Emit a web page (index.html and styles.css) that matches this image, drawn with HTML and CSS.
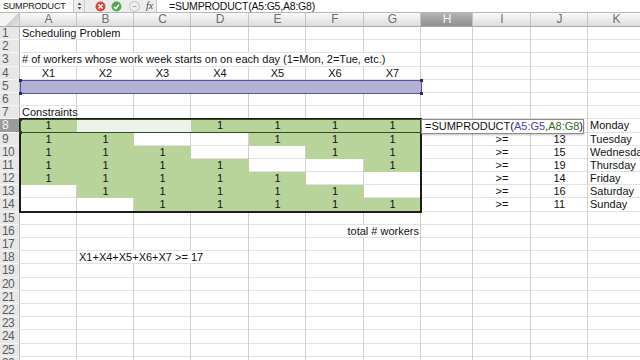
FILE: index.html
```html
<!DOCTYPE html>
<html lang="en">
<head>
<meta charset="utf-8">
<title>Scheduling Problem</title>
<link rel="stylesheet" href="styles.css">
</head>
<body>
<div class="fbar">
  <div class="namebox">SUMPRODUCT</div>
  <div class="stepper">
    <svg width="5" height="8" viewBox="0 0 5 8"><path d="M2.5 0.5 L4.5 3 H0.5 Z M2.5 7.5 L4.5 5 H0.5 Z" fill="#555"/></svg>
  </div>
  <div class="tools">
    <svg class="btn" width="11" height="11" viewBox="0 0 11 11"><circle cx="5.5" cy="5.5" r="5" fill="#d9483f"/><path d="M3.5 3.5 L7.5 7.5 M7.5 3.5 L3.5 7.5" stroke="#fff" stroke-width="1.6"/></svg>
    <svg class="btn" width="11" height="11" viewBox="0 0 11 11"><circle cx="5.5" cy="5.5" r="5" fill="#4cab4a"/><path d="M3 5.8 L4.8 7.5 L8 3.8" stroke="#fff" stroke-width="1.6" fill="none"/></svg>
    <svg class="btn faded" width="11" height="11" viewBox="0 0 11 11"><circle cx="5.5" cy="5.5" r="4.8" fill="#f2f2f2" stroke="#bbb"/><path d="M3.5 5.5 H7.5" stroke="#aaa" stroke-width="1.2"/></svg>
    <span class="fx">fx</span>
  </div>
  <div class="formula">=SUMPRODUCT(A5:G5,A8:G8)</div>
</div>

<div class="sheet">
  <div class="corner"></div>
  <div class="ch">A</div><div class="ch">B</div><div class="ch">C</div><div class="ch">D</div><div class="ch">E</div><div class="ch">F</div><div class="ch">G</div><div class="ch sel">H</div><div class="ch">I</div><div class="ch">J</div><div class="ch">K</div>

  <div class="rh">1</div><div class="c span2">Scheduling Problem</div><div class="c"></div><div class="c"></div><div class="c"></div><div class="c"></div><div class="c"></div><div class="c"></div><div class="c"></div><div class="c"></div><div class="c"></div>
  <div class="rh">2</div><div class="c"></div><div class="c"></div><div class="c"></div><div class="c"></div><div class="c"></div><div class="c"></div><div class="c"></div><div class="c"></div><div class="c"></div><div class="c"></div><div class="c"></div>
  <div class="rh">3</div><div class="c span7"># of workers whose work week starts on on each day (1=Mon, 2=Tue, etc.)</div><div class="c"></div><div class="c"></div><div class="c"></div><div class="c"></div>
  <div class="rh">4</div><div class="c mid">X1</div><div class="c mid">X2</div><div class="c mid">X3</div><div class="c mid">X4</div><div class="c mid">X5</div><div class="c mid">X6</div><div class="c mid">X7</div><div class="c"></div><div class="c"></div><div class="c"></div><div class="c"></div>
  <div class="rh">5</div><div class="c var"></div><div class="c var"></div><div class="c var"></div><div class="c var"></div><div class="c var"></div><div class="c var"></div><div class="c var"></div><div class="c"></div><div class="c"></div><div class="c"></div><div class="c"></div>
  <div class="rh">6</div><div class="c"></div><div class="c"></div><div class="c"></div><div class="c"></div><div class="c"></div><div class="c"></div><div class="c"></div><div class="c"></div><div class="c"></div><div class="c"></div><div class="c"></div>
  <div class="rh">7</div><div class="c">Constraints</div><div class="c"></div><div class="c"></div><div class="c"></div><div class="c"></div><div class="c"></div><div class="c"></div><div class="c"></div><div class="c"></div><div class="c"></div><div class="c"></div>
  <div class="rh sel">8</div><div class="c on">1</div><div class="c pale"></div><div class="c pale"></div><div class="c on">1</div><div class="c on">1</div><div class="c on">1</div><div class="c on">1</div>
  <div class="c edit-cell"><div class="edit">=SUMPRODUCT(<span class="ref5">A5:G5</span>,<span class="ref8">A8:G8</span>)</div></div><div class="c"></div><div class="c"></div><div class="c">Monday</div>
  <div class="rh">9</div><div class="c on">1</div><div class="c on">1</div><div class="c"></div><div class="c"></div><div class="c on">1</div><div class="c on">1</div><div class="c on">1</div><div class="c"></div><div class="c mid">&gt;=</div><div class="c mid">13</div><div class="c">Tuesday</div>
  <div class="rh">10</div><div class="c on">1</div><div class="c on">1</div><div class="c on">1</div><div class="c"></div><div class="c"></div><div class="c on">1</div><div class="c on">1</div><div class="c"></div><div class="c mid">&gt;=</div><div class="c mid">15</div><div class="c">Wednesday</div>
  <div class="rh">11</div><div class="c on">1</div><div class="c on">1</div><div class="c on">1</div><div class="c on">1</div><div class="c"></div><div class="c"></div><div class="c on">1</div><div class="c"></div><div class="c mid">&gt;=</div><div class="c mid">19</div><div class="c">Thursday</div>
  <div class="rh">12</div><div class="c on">1</div><div class="c on">1</div><div class="c on">1</div><div class="c on">1</div><div class="c on">1</div><div class="c"></div><div class="c"></div><div class="c"></div><div class="c mid">&gt;=</div><div class="c mid">14</div><div class="c">Friday</div>
  <div class="rh">13</div><div class="c"></div><div class="c on">1</div><div class="c on">1</div><div class="c on">1</div><div class="c on">1</div><div class="c on">1</div><div class="c"></div><div class="c"></div><div class="c mid">&gt;=</div><div class="c mid">16</div><div class="c">Saturday</div>
  <div class="rh">14</div><div class="c"></div><div class="c"></div><div class="c on">1</div><div class="c on">1</div><div class="c on">1</div><div class="c on">1</div><div class="c on">1</div><div class="c"></div><div class="c mid">&gt;=</div><div class="c mid">11</div><div class="c">Sunday</div>
  <div class="rh">15</div><div class="c"></div><div class="c"></div><div class="c"></div><div class="c"></div><div class="c"></div><div class="c"></div><div class="c"></div><div class="c"></div><div class="c"></div><div class="c"></div><div class="c"></div>
  <div class="rh">16</div><div class="c"></div><div class="c"></div><div class="c"></div><div class="c"></div><div class="c"></div><div class="c span2 right">total # workers</div><div class="c"></div><div class="c"></div><div class="c"></div><div class="c"></div>
  <div class="rh">17</div><div class="c"></div><div class="c"></div><div class="c"></div><div class="c"></div><div class="c"></div><div class="c"></div><div class="c"></div><div class="c"></div><div class="c"></div><div class="c"></div><div class="c"></div>
  <div class="rh">18</div><div class="c"></div><div class="c span3">X1+X4+X5+X6+X7 &gt;= 17</div><div class="c"></div><div class="c"></div><div class="c"></div><div class="c"></div><div class="c"></div><div class="c"></div><div class="c"></div>
  <div class="rh">19</div><div class="c"></div><div class="c"></div><div class="c"></div><div class="c"></div><div class="c"></div><div class="c"></div><div class="c"></div><div class="c"></div><div class="c"></div><div class="c"></div><div class="c"></div>
  <div class="rh">20</div><div class="c"></div><div class="c"></div><div class="c"></div><div class="c"></div><div class="c"></div><div class="c"></div><div class="c"></div><div class="c"></div><div class="c"></div><div class="c"></div><div class="c"></div>
  <div class="rh">21</div><div class="c"></div><div class="c"></div><div class="c"></div><div class="c"></div><div class="c"></div><div class="c"></div><div class="c"></div><div class="c"></div><div class="c"></div><div class="c"></div><div class="c"></div>
  <div class="rh">22</div><div class="c"></div><div class="c"></div><div class="c"></div><div class="c"></div><div class="c"></div><div class="c"></div><div class="c"></div><div class="c"></div><div class="c"></div><div class="c"></div><div class="c"></div>
  <div class="rh">23</div><div class="c"></div><div class="c"></div><div class="c"></div><div class="c"></div><div class="c"></div><div class="c"></div><div class="c"></div><div class="c"></div><div class="c"></div><div class="c"></div><div class="c"></div>
  <div class="rh">24</div><div class="c"></div><div class="c"></div><div class="c"></div><div class="c"></div><div class="c"></div><div class="c"></div><div class="c"></div><div class="c"></div><div class="c"></div><div class="c"></div><div class="c"></div>
  <div class="rh">25</div><div class="c"></div><div class="c"></div><div class="c"></div><div class="c"></div><div class="c"></div><div class="c"></div><div class="c"></div><div class="c"></div><div class="c"></div><div class="c"></div><div class="c"></div>
  <div class="rh">26</div><div class="c"></div><div class="c"></div><div class="c"></div><div class="c"></div><div class="c"></div><div class="c"></div><div class="c"></div><div class="c"></div><div class="c"></div><div class="c"></div><div class="c"></div>

  <!-- range highlights drawn over the cells -->
  <div class="range range-vars"><i class="h tl"></i><i class="h bl"></i><i class="h tr"></i><i class="h br"></i></div>
  <div class="range range-block"></div>
  <div class="range range-mon"><i class="h tl"></i><i class="h bl"></i></div>
</div>
</body>
</html>
```

FILE: styles.css
```css
body {
  margin: 0;
  width: 640px;
  height: 360px;
  overflow: hidden;
  background: #fff;
  font: 11px/13px "Liberation Sans", Arial, sans-serif;
  color: #111;
}

/* formula bar */
.fbar {
  display: flex;
  align-items: center;
  height: 12px;
  background: #ececec;
  border-bottom: 1px solid #b8b8b8;
}

.namebox {
  width: 70px;
  height: 12px;
  padding-left: 3px;
  background: #fbfbfb;
  border-right: 1px solid #c9c9c9;
  font-size: 9px;
  line-height: 12px;
  letter-spacing: -0.2px;
  color: #222;
}

.stepper {
  display: flex;
  align-items: center;
  justify-content: center;
  width: 10px;
  height: 12px;
  border-right: 1px solid #c9c9c9;
}

.tools {
  display: flex;
  align-items: center;
  gap: 5px;
  width: 72px;
  padding-left: 10px;
  height: 12px;
  border-right: 1px solid #c9c9c9;
  box-sizing: border-box;
}

.btn.faded {
  margin-left: 2px;
}

.fx {
  margin-left: 1px;
  font: italic 10px/12px "Liberation Serif", serif;
  color: #444;
}

.formula {
  flex: 1;
  height: 12px;
  padding-left: 12px;
  background: #fff;
  font-size: 10.5px;
  line-height: 12px;
  letter-spacing: -0.2px;
  color: #111;
}

/* sheet grid */
.sheet {
  position: relative;
  display: grid;
  grid-template-columns: 20px 57px 57px 57px 58px 57px 58px 57px 52px 58px 57px 57px;
  grid-template-rows: 14px repeat(26, 13.2px);
}

.corner,
.ch {
  background: linear-gradient(#fafafa, #dcdcdc);
  border-bottom: 1px solid #a9a9a9;
  box-shadow: inset -1px 0 #c4c4c4;
  box-sizing: border-box;
}

.corner {
  background: linear-gradient(135deg, #f4f4f4 55%, #cfcfcf 56%, #e4e4e4);
}

.ch {
  text-align: center;
  font: 12px/13px "Liberation Sans", Arial, sans-serif;
  color: #707070;
}

.ch.sel {
  background: linear-gradient(#b4b4b4, #8f8f8f);
  color: #f4f4f4;
}

.rh {
  padding-left: 2px;
  background: #e7e7e7;
  box-shadow: inset -1px 0 #b9b9b9, inset 0 -1px #f6f6f6;
  font: 12px/13.2px "Liberation Sans", Arial, sans-serif;
  letter-spacing: -0.6px;
  color: #5e5e5e;
}

.rh.sel {
  background: #9b9b9b;
  color: #f2f2f2;
}

.c {
  min-width: 0;
  padding: 0 2px;
  white-space: nowrap;
  box-shadow: inset -1px 0 #d0d0d0, inset 0 -1px #e2e2e2;
}

.mid { text-align: center; }
.right { text-align: right; }

.span2 { grid-column: span 2; }
.span3 { grid-column: span 3; }
.span7 { grid-column: span 7; }

.var {
  background: #b3b1d0;
  box-shadow: none;
}

.on {
  text-align: center;
  background: #b8d49b;
  box-shadow: none;
}

.pale {
  background: #eef2eb;
  box-shadow: none;
}

/* in-cell editor */
.edit-cell {
  position: relative;
}

.edit {
  position: absolute;
  left: 0;
  top: 0;
  width: 158px;
  height: 13px;
  padding-left: 3px;
  background: #fff;
  border: 1px solid #8c8c8c;
  box-shadow: 0 1px 2px rgba(0, 0, 0, 0.25);
  line-height: 13px;
  color: #111;
  z-index: 2;
}

.ref5 { color: #4a3ea3; }
.ref8 { color: #2f6a22; }

/* range outlines */
.range {
  position: absolute;
  pointer-events: none;
}

.range-vars {
  grid-row: 6 / span 1;
  grid-column: 2 / span 7;
  inset: 0 -1px -1px 0;
  border: 1px solid #5a4ea8;
}

.range-block {
  grid-row: 9 / span 7;
  grid-column: 2 / span 7;
  inset: -1px;
  border: 2px solid #1c1c1c;
}

.range-mon {
  grid-row: 9 / span 1;
  grid-column: 2 / span 7;
  inset: 0;
  border: 1px solid #2d5220;
}

.h {
  position: absolute;
  width: 3px;
  height: 3px;
  background: #2e2775;
}

.range-mon .h { background: #1f3a15; }

.tl { left: -2px; top: -2px; }
.bl { left: -2px; bottom: -2px; }
.tr { right: -2px; top: -2px; }
.br { right: -2px; bottom: -2px; }
```
